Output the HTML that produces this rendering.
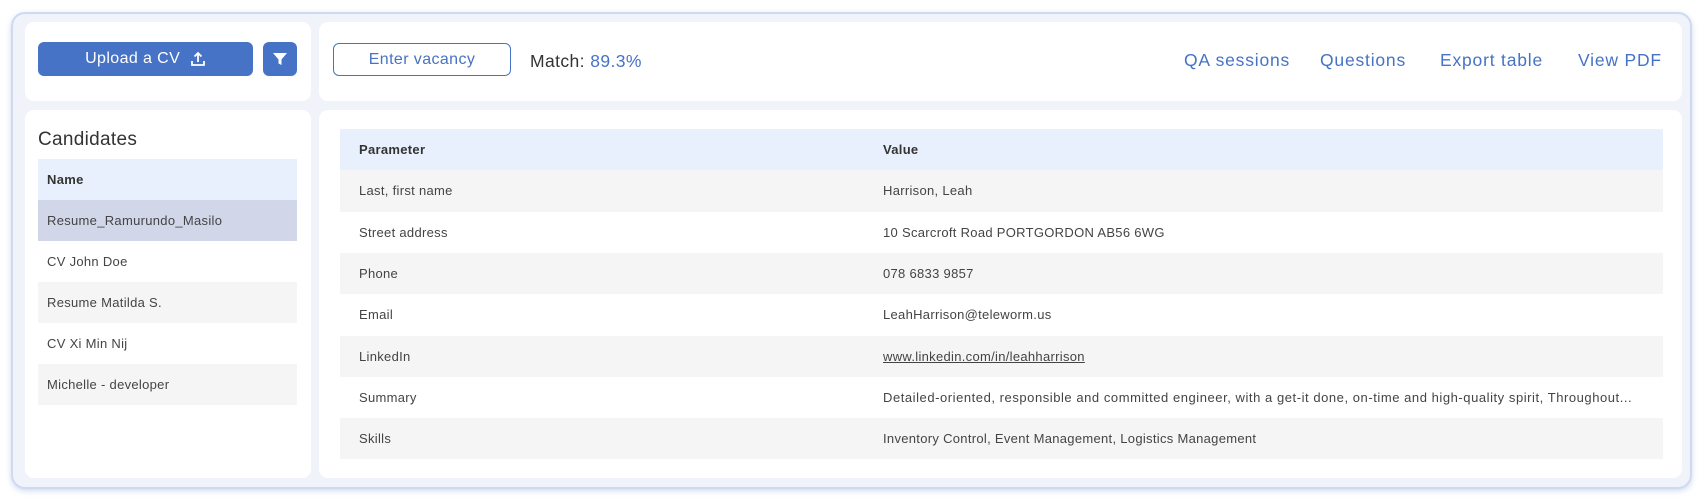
<!DOCTYPE html>
<html><head><meta charset="utf-8"><style>
*{box-sizing:border-box;margin:0;padding:0}
body{width:1704px;height:500px;background:#fff;font-family:"Liberation Sans",sans-serif;position:relative;overflow:hidden;color:#333}
.outer{position:absolute;left:11px;top:12px;width:1681px;height:477px;background:#f0f3f9;border:2px solid #cfdaf2;border-radius:14px;box-shadow:0 2px 6px rgba(120,150,210,.35)}
.card{position:absolute;background:#fff;border-radius:9px}
.btn{position:absolute;background:#4673c6;color:#fff;border-radius:6px;font-size:16px;display:flex;align-items:center;justify-content:center;letter-spacing:0.4px}
.link{position:absolute;top:50px;color:#4673c6;font-size:17.5px;letter-spacing:0.8px}
.row{position:absolute;height:41.3px;font-size:13px;color:#444;display:flex;align-items:center;letter-spacing:0.3px}
</style></head><body>
<div class="outer"></div>
<div class="card" style="left:25px;top:22px;width:286px;height:79px"></div>
<div class="card" style="left:319px;top:22px;width:1363px;height:79px"></div>
<div class="card" style="left:25px;top:110px;width:286px;height:368px"></div>
<div class="card" style="left:319px;top:110px;width:1363px;height:368px"></div>

<div class="btn" style="left:38px;top:42px;width:215px;height:34px">Upload a CV&nbsp;&nbsp;
<svg width="16" height="16" viewBox="0 0 16 16" fill="none" stroke="#fff" stroke-width="1.8"><path d="M8 11V2M4.5 5.5L8 2l3.5 3.5M2 10v4h12v-4"/></svg></div>
<div class="btn" style="left:263px;top:42px;width:34px;height:34px">
<svg width="16" height="16" viewBox="0 0 16 16"><path d="M1 2h14l-5.5 6.5V14l-3-1.5V8.5z" fill="#fff"/></svg></div>

<div style="position:absolute;left:333px;top:43px;width:178px;height:33px;border:1.5px solid #4673c6;border-radius:6px;color:#4673c6;font-size:16px;display:flex;align-items:center;justify-content:center;letter-spacing:0.4px">Enter vacancy</div>
<div style="position:absolute;left:530px;top:51px;font-size:17.5px;color:#333;letter-spacing:0.4px">Match: <span style="color:#4673c6">89.3%</span></div>
<div class="link" style="left:1184px">QA sessions</div>
<div class="link" style="left:1320px">Questions</div>
<div class="link" style="left:1440px">Export table</div>
<div class="link" style="left:1578px">View PDF</div>

<div style="position:absolute;left:38px;top:129px;font-size:19px;color:#333;letter-spacing:0.3px">Candidates</div>
<div class="row" style="left:38px;top:159px;width:259px;background:#e8f0fd;padding-left:9px;font-weight:bold;color:#333">Name</div>
<div class="row" style="left:38px;top:200px;width:259px;background:#d1d6e9;padding-left:9px">Resume_Ramurundo_Masilo</div>
<div class="row" style="left:38px;top:241px;width:259px;padding-left:9px">CV John Doe</div>
<div class="row" style="left:38px;top:282px;width:259px;background:#f5f5f5;padding-left:9px">Resume Matilda S.</div>
<div class="row" style="left:38px;top:323px;width:259px;padding-left:9px">CV Xi Min Nij</div>
<div class="row" style="left:38px;top:364px;width:259px;background:#f5f5f5;padding-left:9px">Michelle - developer</div>

<div class="row" style="left:340px;top:129px;width:1323px;background:#e8f0fd;font-weight:bold;color:#333"><span style="position:absolute;left:19px">Parameter</span><span style="position:absolute;left:543px">Value</span></div>
<div class="row" style="left:340px;top:170.3px;width:1323px;background:#f5f5f5"><span style="position:absolute;left:19px">Last, first name</span><span style="position:absolute;left:543px">Harrison, Leah</span></div>
<div class="row" style="left:340px;top:211.6px;width:1323px"><span style="position:absolute;left:19px">Street address</span><span style="position:absolute;left:543px">10 Scarcroft Road PORTGORDON AB56 6WG</span></div>
<div class="row" style="left:340px;top:252.9px;width:1323px;background:#f5f5f5"><span style="position:absolute;left:19px">Phone</span><span style="position:absolute;left:543px">078 6833 9857</span></div>
<div class="row" style="left:340px;top:294.2px;width:1323px"><span style="position:absolute;left:19px">Email</span><span style="position:absolute;left:543px">LeahHarrison@teleworm.us</span></div>
<div class="row" style="left:340px;top:335.5px;width:1323px;background:#f5f5f5"><span style="position:absolute;left:19px">LinkedIn</span><span style="position:absolute;left:543px;text-decoration:underline">www.linkedin.com/in/leahharrison</span></div>
<div class="row" style="left:340px;top:376.8px;width:1323px"><span style="position:absolute;left:19px">Summary</span><span style="position:absolute;left:543px;letter-spacing:0.55px;white-space:nowrap">Detailed-oriented, responsible and committed engineer, with a get-it done, on-time and high-quality spirit, Throughout...</span></div>
<div class="row" style="left:340px;top:418.1px;width:1323px;background:#f5f5f5"><span style="position:absolute;left:19px">Skills</span><span style="position:absolute;left:543px">Inventory Control, Event Management, Logistics Management</span></div>
</body></html>
